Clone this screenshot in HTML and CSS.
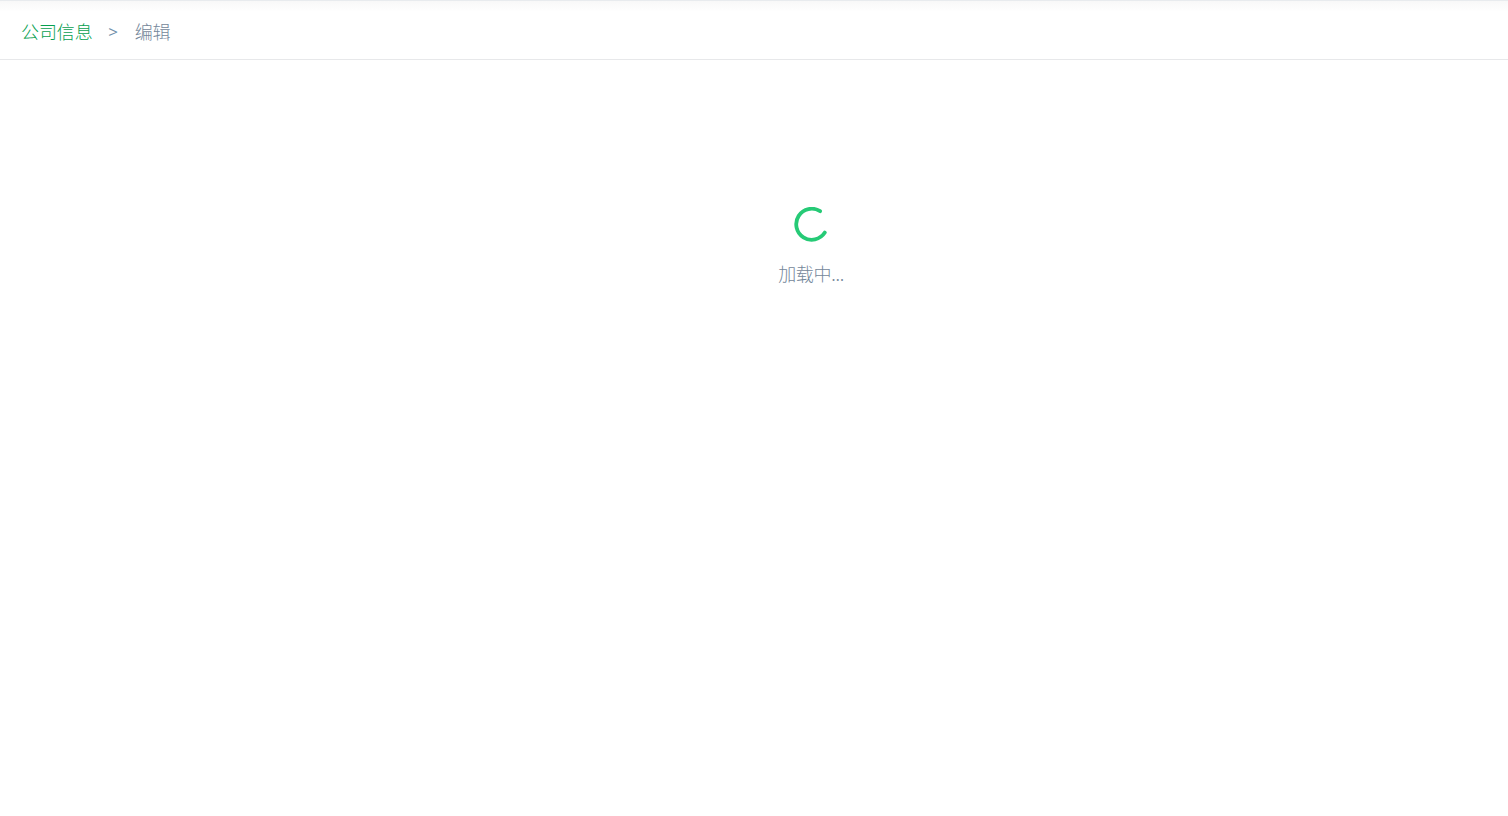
FILE: index.html
```html
<!DOCTYPE html>
<html lang="zh-CN">
<head>
<meta charset="utf-8">
<title>公司信息</title>
<link rel="stylesheet" href="styles.css">
</head>
<body>
<header class="topbar">
  <nav class="breadcrumb">
    <a class="breadcrumb-link">公司信息</a>
    <span class="breadcrumb-separator">&gt;</span>
    <span class="breadcrumb-current">编辑</span>
  </nav>
</header>
<main class="content">
  <div class="loading">
    <svg class="spinner" width="36" height="36" viewBox="0 0 36 36" fill="none">
      <path d="M27.1 4.2A15.5 15.5 0 1 0 31.8 25.6"/>
    </svg>
    <p class="loading-text">加载中...</p>
  </div>
</main>
</body>
</html>
```

FILE: styles.css
```css
* { box-sizing: border-box; }

body {
  margin: 0;
  background: #fff;
  color: #74879a;
  font-family: "Noto Sans CJK SC", sans-serif;
  font-size: 18px;
  font-weight: 300;
}

.topbar {
  height: 60px;
  border-top: 1px solid #e8ebee;
  border-bottom: 1px solid #e7e8ea;
  background: linear-gradient(#f8f8f8, #fff 11px);
}

.breadcrumb {
  display: flex;
  align-items: center;
  height: 59px;
  padding-left: 21px;
  letter-spacing: -0.1px;
}

.breadcrumb-link { color: #07a050; }

.breadcrumb-separator {
  margin: 2px 16.8px 0 15.6px;
  color: #7190ab;
  font-family: "Open Sans", sans-serif;
  font-size: 17px;
  font-weight: 400;
}

.content {
  display: flex;
  justify-content: center;
  padding: 147px 0 0 114px;
}

.loading {
  display: flex;
  flex-direction: column;
  align-items: center;
}

.spinner {
  stroke: #26ca76;
  stroke-width: 3.8;
  stroke-linecap: round;
}

.loading-text {
  margin: 17px 0 0;
  line-height: 26px;
  letter-spacing: -0.3px;
}
```
